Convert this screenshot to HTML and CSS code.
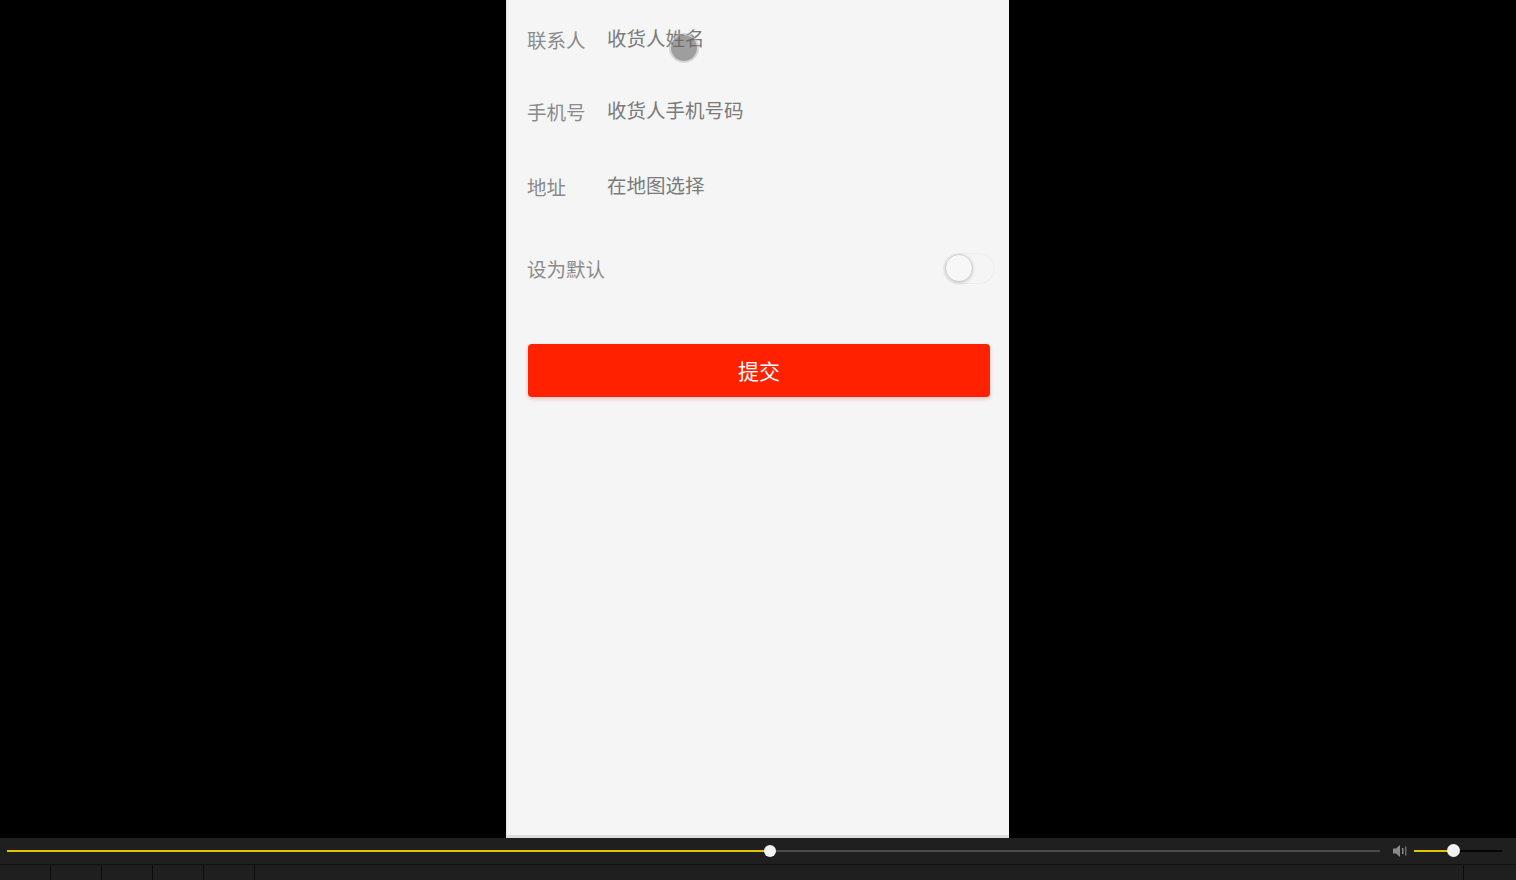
FILE: index.html
```html
<!DOCTYPE html>
<html lang="zh-CN">
<head>
<meta charset="utf-8">
<title>新增地址</title>
<link rel="stylesheet" href="styles.css">
</head>
<body>
<div class="stage">
  <div class="phone">
    <div class="row row-1">
      <span class="label">联系人</span>
      <span class="input">收货人姓名</span>
    </div>
    <div class="row row-2">
      <span class="label">手机号</span>
      <span class="input">收货人手机号码</span>
    </div>
    <div class="row row-3">
      <span class="label">地址</span>
      <span class="input">在地图选择</span>
    </div>
    <div class="row row-4">
      <span class="label">设为默认</span>
      <span class="switch"><span class="knob"></span></span>
    </div>
    <div class="btn-wrap">
      <button class="submit">提交</button>
    </div>
    <div class="cursor"></div>
  </div>
</div>
<div class="player">
  <div class="controls">
    <div class="progress">
      <div class="played" style="width:763px"></div>
      <div class="handle"></div>
    </div>
    <svg class="vol-icon" width="14" height="14" viewBox="0 0 14 14">
      <path d="M0 4.5h3l4-3.5v12l-4-3.5H0z" fill="#8a8a8a"/>
      <rect x="9" y="4" width="1.5" height="6" fill="#8a8a8a"/>
      <rect x="12" y="2.5" width="1.5" height="9" fill="#6a6a6a"/>
    </svg>
    <div class="volume">
      <div class="vol-fill" style="width:39px"></div>
      <div class="handle small"></div>
    </div>
  </div>
  <div class="tabs">
    <div class="tab"></div>
    <div class="tab"></div>
    <div class="tab"></div>
    <div class="tab"></div>
    <div class="tab"></div>
    <div class="tab grow"></div>
    <div class="tab last"></div>
  </div>
</div>
</body>
</html>
```

FILE: styles.css
```css
* { box-sizing: border-box; }
html, body { margin: 0; padding: 0; }
body {
  background: #000;
  width: 1516px;
  height: 880px;
  overflow: hidden;
  font-family: "Noto Sans CJK SC", "Noto Sans", sans-serif;
  display: flex;
  flex-direction: column;
}
.stage {
  height: 838px;
  display: flex;
  justify-content: center;
}
.phone {
  position: relative;
  width: 503px;
  height: 838px;
  margin-left: -1px;
  background: #f5f5f5;
  border-left: 1px solid #e2e2e2;
  border-bottom: 3px solid #dedede;
  padding: 0 19px 0 20px;
  display: flex;
  flex-direction: column;
}
.row {
  display: flex;
  align-items: center;
  font-size: 19.5px;
}
.row-1 { height: 80px; }
.row-2 { height: 64px; }
.row-3 { height: 86px; }
.row-4 { height: 78px; justify-content: space-between; }
.label {
  width: 80px;
  color: #8b8b8b;
  position: relative;
  top: -1px;
}
.input {
  color: #7a7a7a;
  position: relative;
  top: -3px;
}
.switch {
  width: 52px;
  height: 31px;
  border-radius: 16px;
  border: 1px solid #ececec;
  background: #f5f5f5;
  margin-right: -7px;
  padding: 1px;
  display: flex;
  align-items: center;
  position: relative;
  top: -1px;
  left: -2px;
}
.knob {
  width: 28px;
  height: 28px;
  border-radius: 50%;
  background: #f7f7f7;
  border: 1px solid #d0d0d0;
  box-shadow: 0 1px 3px rgba(0,0,0,0.18);
}
.btn-wrap {
  padding-top: 36px;
  padding-left: 1px;
}
.submit {
  display: block;
  width: 462px;
  height: 53px;
  padding-bottom: 2px;
  border: none;
  border-radius: 4px;
  background: #ff2100;
  color: #fff;
  font-family: "Noto Sans CJK SC", "Noto Sans", sans-serif;
  font-size: 21px;
  box-shadow: 0 2px 4px rgba(200, 40, 20, 0.25);
}
.cursor {
  position: absolute;
  left: 164px;
  top: 35px;
  width: 26px;
  height: 26px;
  border-radius: 50%;
  background: rgba(100, 100, 100, 0.6);
  box-shadow: 0 0 0 2px rgba(180,180,180,0.5);
}
.player {
  height: 42px;
  background: #1f1f1f;
  display: flex;
  flex-direction: column;
}
.controls {
  height: 27px;
  display: flex;
  align-items: center;
  padding: 0 14px 0 7px;
  border-bottom: 1px solid #121212;
}
.progress {
  position: relative;
  flex: 1;
  height: 2px;
  background: #4a4a4a;
  margin-right: 13px;
}
.played {
  height: 2px;
  background: #e2c400;
}
.handle {
  position: absolute;
  left: 757px;
  top: -5px;
  width: 12px;
  height: 12px;
  border-radius: 50%;
  background: #f2f2f2;
}
.vol-icon { margin-right: 7px; }
.volume {
  position: relative;
  width: 88px;
  height: 2px;
  background: #050505;
}
.vol-fill {
  height: 2px;
  background: #e2c400;
}
.handle.small {
  left: 33px;
  top: -6px;
  width: 13px;
  height: 13px;
}
.tabs {
  flex: 1;
  display: flex;
}
.tab {
  width: 51px;
  border-right: 1px solid #0c0c0c;
}
.tab.grow { flex: 1; }
.tab.last { width: 52px; border-right: none; }
```
